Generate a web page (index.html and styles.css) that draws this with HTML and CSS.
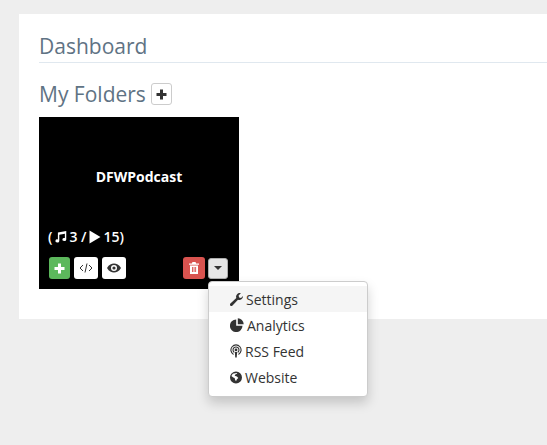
FILE: index.html
```html
<!DOCTYPE html>
<html lang="en">
<head>
  <meta charset="UTF-8">
  <meta name="viewport" content="width=device-width, initial-scale=1.0">
  <title>Dashboard</title>
  <link rel="stylesheet" href="styles.css">
</head>
<body>
  <div class="panel">
    <h1 class="page-title">Dashboard</h1>
    <h2 class="section-title">My Folders
      <button class="btn btn-add-folder">
        <svg class="icon" width="11" height="11" viewBox="0 0 11 11"><path d="M4 0.5h3v3.5h3.5v3h-3.5v3.5h-3v-3.5h-3.500v-3h3.500z" fill="#333"/></svg>
      </button>
    </h2>
    <div class="folder-wrap">
      <div class="folder-card">
        <div class="folder-name">DFWPodcast</div>
        <div class="folder-stats">(<svg class="icon" width="13" height="14" viewBox="0 0 14 14"><path d="M4.2 2.2l9-1.700v9.200a2.100 1.700 0 1 1-1.500-1.600v-4.600l-6 1.100v6.600a2.100 1.700 0 1 1-1.500-1.600z" fill="#fff"/></svg><span>3 /</span><svg class="icon" width="12" height="14" viewBox="0 0 12 14"><path d="M0.500 0.500l11 6.500-11 6.500z" fill="#fff"/></svg><span class="stat-last">15)</span></div>
        <div class="folder-actions">
          <button class="btn btn-green">
            <svg class="icon" width="11" height="11" viewBox="0 0 11 11"><path d="M4 0.5h3v3.500h3.500v3h-3.500v3.500h-3v-3.500h-3.500v-3h3.500z" fill="#fff"/></svg>
          </button>
          <button class="btn btn-white">
            <svg class="icon" width="14" height="10" viewBox="0 0 14 10"><path d="M4 2L1 5l3 3M10 2l3 3-3 3M8 0.500L6 9.500" fill="none" stroke="#333" stroke-width="1"/></svg>
          </button>
          <button class="btn btn-white">
            <svg class="icon" width="14" height="10" viewBox="0 0 14 10"><path fill-rule="evenodd" d="M0 5C2 1.500 4.500 0.500 7 0.500S12 1.500 14 5c-2 3.500-4.500 4.500-7 4.500S2 8.500 0 5zM7 2a3 3 0 1 0 0 6 3 3 0 0 0 0-6z" fill="#333"/><circle cx="7" cy="5" r="1.600" fill="#333"/></svg>
          </button>
          <span class="spacer"></span>
          <button class="btn btn-red">
            <svg class="icon" width="10" height="12" viewBox="0 0 10 12"><path fill-rule="evenodd" d="M3.500 0h3l0.700 1.500H10v1.200H0V1.500h2.800zM1 3.500h8V12H1zM3 5v5h0.900V5zM4.600 5v5h0.900V5zM6.200 5v5h0.900V5z" fill="#fff"/></svg>
          </button>
          <button class="btn btn-caret"><span class="caret"></span></button>
        </div>
      </div>
      <ul class="dropdown">
        <li class="dropdown-item active">
          <svg class="icon" width="13" height="13" viewBox="0 0 13 13"><path d="M13 3.200a3.700 3.700 0 0 1-5 3.500L2.500 12.600a1.400 1.400 0 0 1-2.100-2L6.300 5a3.700 3.700 0 0 1 4.600-4.800L8.600 2.500l0.500 1.900 1.900 0.500 2-2z" fill="#333"/></svg>
          Settings
        </li>
        <li class="dropdown-item">
          <svg class="icon" width="14" height="14" viewBox="0 0 14 14"><path d="M6.200 1.500v6.300h6.300A6.300 6.300 0 1 1 6.200 1.500z M7.800 0.300a6 6 0 0 1 5.900 5.900H7.800z" fill="#333"/></svg>
          Analytics
        </li>
        <li class="dropdown-item">
          <svg class="icon" width="12" height="14" viewBox="0 0 13 14"><path d="M3.800 10.700a5.500 5.500 0 1 1 5.400 0M4.700 8.500a3.200 3.200 0 1 1 3.600 0" fill="none" stroke="#333" stroke-width="1.200"/><circle cx="6.500" cy="5.800" r="1.500" fill="#333"/><path d="M5.300 8h2.400l-0.400 6H5.700z" fill="#333"/></svg>
          RSS Feed
        </li>
        <li class="dropdown-item">
          <svg class="icon" width="12" height="13" viewBox="0 0 13 13"><path fill-rule="evenodd" d="M6.500 0a6.500 6.500 0 1 1 0 13 6.500 6.500 0 0 1 0-13zM3 2.500L1.500 5l2 1.500 1.500 0.500 0.500 2 1 1.500 1-2 1.500-1.500-1.500-1.500L5 4.500l1-1.500 2-0.500-1-1z" fill="#333"/></svg>
          Website
        </li>
      </ul>
    </div>
  </div>
</body>
</html>
```

FILE: styles.css
```css
html {
  height: 100%;
}
body {
  margin: 0;
  padding-top: 14px;
  height: 100%;
  box-sizing: border-box;
  background-color: #eeeeee;
  font-family: "Open Sans", Arial, sans-serif;
  color: #333;
}
.panel {
  margin-left: 19px;
  padding: 20px 0 30px 20px;
  height: 255px;
  background-color: #fff;
}
.icon {
  display: inline-block;
  vertical-align: middle;
}
.page-title {
  margin: 0 0 19px;
  padding-bottom: 3px;
  border-bottom: 1px solid #e0e8ef;
  font-size: 21px;
  line-height: 25px;
  font-weight: 400;
  color: #5f7384;
}
.section-title {
  display: flex;
  align-items: center;
  gap: 5px;
  margin: 0 0 11px;
  font-size: 21px;
  line-height: 24px;
  font-weight: 400;
  color: #5f7384;
}
.btn {
  display: flex;
  align-items: center;
  justify-content: center;
  height: 22px;
  padding: 0;
  border: 1px solid transparent;
  border-radius: 3px;
  box-sizing: border-box;
}
.btn-add-folder {
  width: 21px;
  background-color: #fff;
  border-color: #ccc;
}
.folder-wrap {
  position: relative;
  width: 200px;
}
.folder-card {
  display: flex;
  flex-direction: column;
  width: 200px;
  height: 172px;
  padding: 0 10px;
  box-sizing: border-box;
  background-color: #000;
  color: #fff;
}
.folder-name {
  margin-top: 50px;
  text-align: center;
  font-size: 14px;
  line-height: 20px;
  font-weight: 700;
}
.folder-stats {
  display: flex;
  align-items: center;
  gap: 2px;
  margin-top: 40px;
  margin-left: -1px;
  font-size: 14px;
  line-height: 20px;
  font-weight: 600;
}
.stat-last {
  margin-left: 1px;
}
.folder-actions {
  display: flex;
  align-items: center;
  gap: 4px;
  margin-top: 10px;
}
.spacer {
  flex: 1;
}
.btn-green {
  width: 21px;
  background-color: #5cb85c;
}
.btn-white {
  width: 24px;
  background-color: #fff;
}
.btn-red {
  width: 22px;
  margin-right: -1px;
  background-color: #d9534f;
}
.btn-caret {
  width: 20px;
  height: 21px;
  margin-right: 1px;
  background-color: #e6e6e6;
  border-color: #adadad;
}
.caret {
  width: 0;
  height: 0;
  border-top: 4px solid #333;
  border-left: 4px solid transparent;
  border-right: 4px solid transparent;
}
.dropdown {
  position: absolute;
  top: 164px;
  left: 169px;
  width: 160px;
  height: 116px;
  margin: 0;
  padding: 4px 0;
  box-sizing: border-box;
  list-style: none;
  background-color: #fff;
  border: 1px solid #ccc;
  border-radius: 4px;
  box-shadow: 0 6px 12px rgba(0,0,0,0.175);
}
.dropdown-item {
  display: flex;
  align-items: center;
  gap: 3px;
  height: 26px;
  padding: 0 20px 0 21px;
  font-size: 14px;
  color: #333;
}
.dropdown-item.active {
  background-color: #f5f5f5;
}
```
